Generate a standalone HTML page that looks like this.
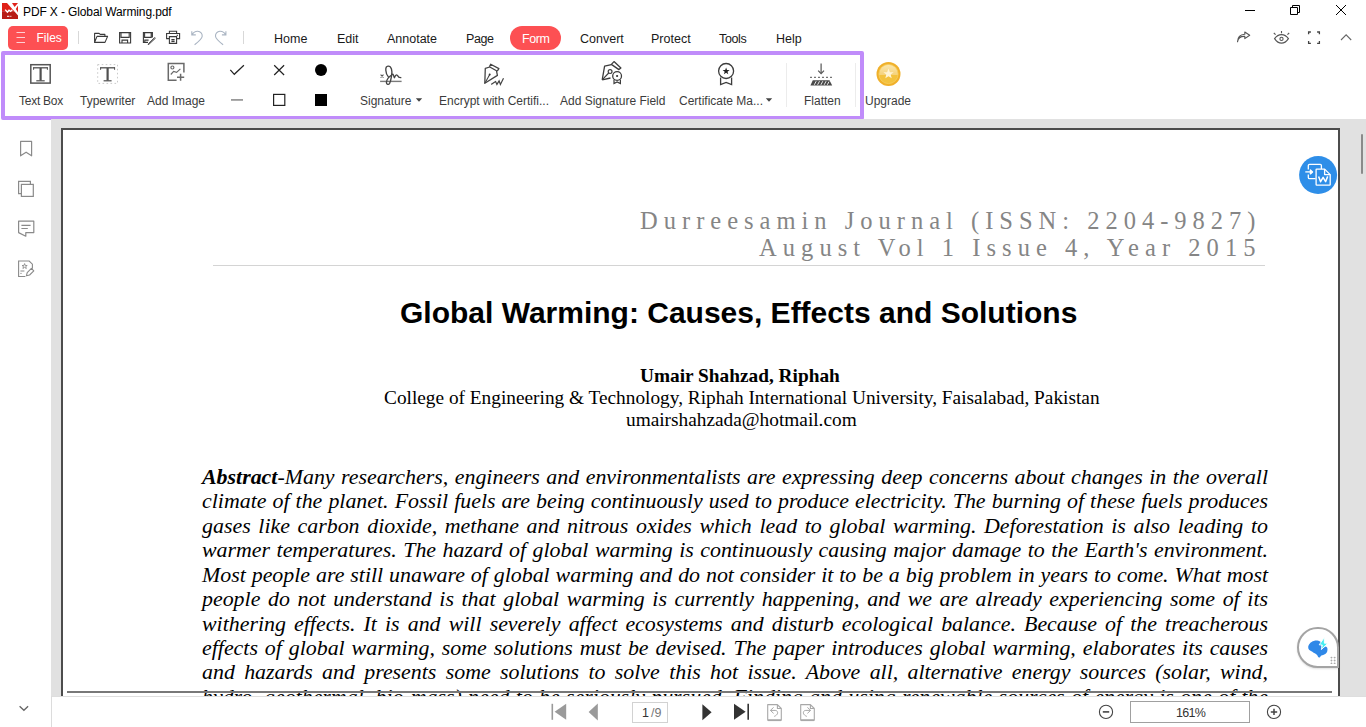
<!DOCTYPE html>
<html><head><meta charset="utf-8">
<style>
*{margin:0;padding:0;box-sizing:border-box}
html,body{width:1366px;height:727px;overflow:hidden;background:#fff;position:relative;font-family:"Liberation Sans",sans-serif}
.a{position:absolute;white-space:pre}
.ui{font-family:"Liberation Sans",sans-serif;color:#1f1f1f}
.lbl{font-size:12px;color:#3c3c3c;line-height:12px}
.menu{font-size:12.5px;color:#1a1a1a;line-height:13px;margin-top:0.8px}
svg{position:absolute;overflow:visible}
.serif{font-family:"Liberation Serif",serif}
.abs{font-family:"Liberation Serif",serif;font-style:italic;font-size:21.9px;line-height:21.9px;width:1066px;left:202px;text-align:justify;text-align-last:justify;white-space:normal;color:#000}
</style></head><body>

<!-- title bar -->
<svg style="left:2px;top:3px" width="16" height="16" viewBox="0 0 16 16">
  <rect x="0" y="0" width="16" height="8.2" fill="#df2118"/>
  <rect x="0" y="8.2" width="16" height="7.8" fill="#b81b15"/>
  <path d="M5 0H16V12.6Z" fill="#fff"/>
  <path d="M10 0H16L12.6 3.9Z" fill="#df2118"/>
  <path d="M16 2.4L13.8 6L16 9.4Z" fill="#df2118"/>
  <path d="M3.2 6.6L5.4 9.2L7 7.2L8.6 8.4L10.4 6.8" fill="none" stroke="#fff" stroke-width="1.4"/>
  <path d="M5 13.3H7.4M8.3 13.3H9.4" stroke="#fff" stroke-width="1"/>
</svg>
<div class="a ui" style="left:23px;top:4.5px;font-size:12px;line-height:14px;letter-spacing:-0.12px;color:#000">PDF X - Global Warming.pdf</div>

<!-- window controls -->
<svg style="left:1245px;top:5px" width="10" height="10"><path d="M0 5.5H10" stroke="#000" stroke-width="1"/></svg>
<svg style="left:1290px;top:5px" width="10" height="10"><path d="M0.5 2.5H7.5V9.5H0.5Z M2.5 2.5V0.5H9.5V7.5H7.5" fill="none" stroke="#000" stroke-width="1"/></svg>
<svg style="left:1336px;top:5px" width="10" height="10"><path d="M0 0L10 10M10 0L0 10" stroke="#000" stroke-width="1"/></svg>

<!-- menu bar -->
<div class="a" style="left:8px;top:26px;width:60px;height:24px;background:#fd5053;border-radius:5px"></div>
<svg style="left:16px;top:32px" width="10" height="12"><path d="M0.5 0.5H9M0.5 5.5H9M0.5 10.5H9" stroke="#ffd0d4" stroke-width="1.2"/></svg>
<div class="a ui" style="left:36.5px;top:30.5px;font-size:12px;line-height:14px;color:#fff">Files</div>
<div class="a" style="left:78px;top:31px;width:1px;height:13px;background:#d8d8d8"></div>
<div class="a" style="left:243px;top:31px;width:1px;height:13px;background:#d8d8d8"></div>

<div class="a" style="left:510px;top:26px;width:51px;height:24px;background:#fd5053;border-radius:12px"></div>
<div class="a menu" style="left:274px;top:32px">Home</div>
<div class="a menu" style="left:337px;top:32px">Edit</div>
<div class="a menu" style="left:387px;top:32px">Annotate</div>
<div class="a menu" style="left:466px;top:32px;letter-spacing:-0.4px">Page</div>
<div class="a menu" style="left:522px;top:32px;color:#fff;letter-spacing:-0.45px">Form</div>
<div class="a menu" style="left:580px;top:32px">Convert</div>
<div class="a menu" style="left:651px;top:32px">Protect</div>
<div class="a menu" style="left:719px;top:32px;letter-spacing:-0.35px">Tools</div>
<div class="a menu" style="left:776px;top:32px">Help</div>

<!-- toolbar -->
<div class="a" style="left:1px;top:51px;width:863px;height:69px;border:4px solid #c08cfa;border-radius:2px"></div>

<div class="a lbl" style="left:19px;top:95px;letter-spacing:-0.25px">Text Box</div>
<div class="a lbl" style="left:80px;top:95px">Typewriter</div>
<div class="a lbl" style="left:147px;top:95px">Add Image</div>
<div class="a lbl" style="left:360px;top:95px">Signature</div>
<div class="a lbl" style="left:439px;top:95px">Encrypt with Certifi...</div>
<div class="a lbl" style="left:560px;top:95px">Add Signature Field</div>
<div class="a lbl" style="left:679px;top:95px">Certificate Ma...</div>
<div class="a lbl" style="left:804px;top:95px">Flatten</div>
<div class="a lbl" style="left:865px;top:95px">Upgrade</div>

<!-- menu icons -->
<svg style="left:90px;top:28px" width="22" height="18" viewBox="90 28 22 18"><path d="M94.6 42.4V33.4H99.1L100.2 34.4H104.9V36.3M94.6 42.4L97 36.4H107.6L105 42.4Z" fill="none" stroke="#3a3a3a" stroke-width="1.1" stroke-linejoin="round"/></svg>
<svg style="left:116px;top:28px" width="18" height="18" viewBox="116 28 18 18"><path d="M119.6 32.6H130.6V43H119.6Z M121 32.6V37.4H129.2V32.6 M122 43V40.1H127.6V43" fill="none" stroke="#3a3a3a" stroke-width="1.1"/></svg>
<svg style="left:140px;top:28px" width="18" height="18" viewBox="140 28 18 18"><path d="M148 42.4H143.4V32.6H152.4V37.4 M144.6 32.6V37.4H151.2V32.6 M144.8 42.4V40.1H148.6" fill="none" stroke="#3a3a3a" stroke-width="1.1"/><path d="M155.3 38.3L149 44.2L148.2 44.6L148.6 43.6L154.6 37.6Z" fill="none" stroke="#3a3a3a" stroke-width="1"/></svg>
<svg style="left:164px;top:28px" width="18" height="18" viewBox="164 28 18 18"><path d="M169.4 33.5V31.3H176.6V33.5 M169.4 38.6H166.6V33.5H179.6V38.6H176.6 M169.4 36.6H176.6V43.4H169.4Z M171.4 39.6H174.6 M171.4 41.4H174.6" fill="none" stroke="#3a3a3a" stroke-width="1.1"/><path d="M176.6 35.3H178" stroke="#3a3a3a" stroke-width="1"/></svg>
<svg style="left:188px;top:28px" width="18" height="18" viewBox="188 28 18 18"><path d="M191.8 31.2V34.9H195.8 M192.2 34.6C193.5 32.2 195.8 31.2 197.8 31.3C200.6 31.5 202.4 33.8 202.2 36.2C202 38.6 199.6 40.8 194.6 44.8" fill="none" stroke="#a9b4c2" stroke-width="1.1"/></svg>
<svg style="left:212px;top:28px" width="18" height="18" viewBox="212 28 18 18"><path d="M225.9 31.2V34.9H221.9 M225.5 34.6C224.2 32.2 221.9 31.2 219.9 31.3C217.1 31.5 215.3 33.8 215.5 36.2C215.7 38.6 218.1 40.8 223.1 44.8" fill="none" stroke="#a9b4c2" stroke-width="1.1"/></svg>

<!-- right menu icons -->
<svg style="left:1235px;top:30px" width="18" height="16" viewBox="1235 30 18 16"><path d="M1237.5 41.8C1238 38.5 1240.5 36.2 1244.8 36.4V38.6L1249.7 35.3L1244.8 32V34.2C1240 34.4 1237.6 37.8 1237.5 41.8Z" fill="none" stroke="#555" stroke-width="1.1" stroke-linejoin="round"/></svg>
<svg style="left:1272px;top:30px" width="20" height="16" viewBox="1272 30 20 16"><path d="M1274.6 38.6C1276.6 35.8 1279 34.6 1281.5 34.6C1284 34.6 1286.4 35.8 1288.4 38.6C1286.4 41.6 1284 43.2 1281.5 43.2C1279 43.2 1276.6 41.6 1274.6 38.6Z" fill="none" stroke="#555" stroke-width="1.2"/><circle cx="1281.5" cy="38.9" r="1.6" fill="none" stroke="#555" stroke-width="1.1"/><path d="M1281.5 31V33.3 M1273.8 33L1275.6 34.6 M1289.2 33L1287.4 34.6" stroke="#555" stroke-width="1.1"/></svg>
<svg style="left:1306px;top:30px" width="16" height="16" viewBox="1306 30 16 16"><path d="M1308.6 34.3V32H1310.9 M1317.1 32H1319.4V34.3 M1319.4 41V43.3H1317.1 M1310.9 43.3H1308.6V41" fill="none" stroke="#444" stroke-width="1.3"/></svg>
<svg style="left:1339px;top:30px" width="14" height="14" viewBox="1339 30 14 14"><path d="M1341 40L1346.1 34.9L1351.2 40" fill="none" stroke="#666" stroke-width="1.1"/></svg>

<!-- toolbar icons -->
<svg style="left:28px;top:62px" width="25" height="24" viewBox="28 62 25 24"><rect x="30.8" y="64.7" width="19.4" height="18.4" fill="none" stroke="#565656" stroke-width="1.5"/><path d="M33.4 67.8H47.6" stroke="#505050" stroke-width="1.3"/><path d="M33.6 67.2V69.8M47.4 67.2V69.8" stroke="#505050" stroke-width="1"/><path d="M40.6 68V80.6" stroke="#505050" stroke-width="2.2"/><path d="M36.3 80.8H44.7" stroke="#505050" stroke-width="1.2"/></svg>
<svg style="left:95px;top:62px" width="25" height="24" viewBox="95 62 25 24"><rect x="97.7" y="64.6" width="19.8" height="18.8" fill="none" stroke="#bdbdbd" stroke-width="0.8" stroke-dasharray="1.6 2.4"/><path d="M100.4 67.8H114.8" stroke="#505050" stroke-width="1.3"/><path d="M100.6 67.2V69.8M114.6 67.2V69.8" stroke="#505050" stroke-width="1"/><path d="M107.6 68V80.6" stroke="#505050" stroke-width="2.2"/><path d="M103.6 80.8H111.6" stroke="#505050" stroke-width="1.2"/></svg>
<svg style="left:165px;top:60px" width="24" height="24" viewBox="165 60 24 24"><path d="M176.6 80.3H168.3V63.4H183.9V72.4" fill="none" stroke="#6a6a6a" stroke-width="1.5"/><circle cx="172.4" cy="67.5" r="1.5" fill="none" stroke="#6a6a6a" stroke-width="1.2"/><path d="M170.8 74.5L173.6 71.4L176.6 72.4L180.4 68.9" fill="none" stroke="#6a6a6a" stroke-width="1.2"/><path d="M177 77.3H184.2M180.6 73.8V80.8" stroke="#6a6a6a" stroke-width="1.5"/></svg>

<svg style="left:228px;top:62px" width="100" height="48" viewBox="228 62 100 48">
<path d="M230.3 69.8L234.3 74.3L243.9 65.2" fill="none" stroke="#222" stroke-width="1.2"/>
<path d="M274.2 65.2L284.1 75M284.1 65.2L274.2 75" stroke="#222" stroke-width="1.2"/>
<circle cx="321" cy="70" r="6" fill="#000"/>
<path d="M231 99.9H243" stroke="#9a9a9a" stroke-width="1.8"/>
<rect x="273.6" y="94.4" width="11.2" height="11" fill="none" stroke="#222" stroke-width="1.2"/>
<rect x="315" y="94" width="12" height="12" fill="#000"/>
</svg>

<svg style="left:375px;top:58px" width="35" height="32" viewBox="0 0 35 32"><path d="M5.1 23.4H26.6" stroke="#7a7a7a" stroke-width="1.4"/><path d="M5.6 16.6L8.5 19.5M8.5 16.6L5.6 19.5" stroke="#555" stroke-width="1.1"/><path d="M13.2 18.6C10.5 15.5 9.6 8.4 13 8.1C16.5 7.8 17.5 13 16.6 17.5C16 21 15.8 23.5 14.5 25.6C13.6 26.8 11.6 26.6 11.4 24.6C11.3 22.4 12.8 19.6 17.6 16.3C18.6 16 19 19.8 19.4 19.8C20 18 20.8 16.8 21.6 16.8C22.8 16.8 23.2 19.4 24.4 19.4L25.8 19.6" fill="none" stroke="#444" stroke-width="1.35" stroke-linejoin="round" stroke-linecap="round"/></svg>

<svg style="left:478px;top:58px" width="32" height="32" viewBox="0 0 32 32"><path d="M6.8 25.3L7.3 10.3L11.8 9L18.5 12.8L19.4 17.4Z" fill="none" stroke="#444" stroke-width="1.3" stroke-linejoin="round"/><path d="M11.4 8.8L12.7 6.2L20.9 10.6L19.2 13.1" fill="none" stroke="#444" stroke-width="1.3" stroke-linejoin="round"/><path d="M7 25L11.6 16.8" stroke="#444" stroke-width="1.1"/><circle cx="11.7" cy="16.6" r="1" fill="#333"/><path d="M13.2 26.4C15 25.5 16.5 24 17.6 23.6L18.9 26.4L21.1 22.9L22.4 26.4L25.5 20.2" fill="none" stroke="#444" stroke-width="1.2"/></svg>

<svg style="left:596px;top:56px" width="32" height="32" viewBox="0 0 32 32"><path d="M6.2 23.8L8.6 10.1L15.4 8.6M6.2 23.8L14.5 22" fill="none" stroke="#3c3c3c" stroke-width="1.3" stroke-linejoin="round"/><path d="M15.4 8.4L18 5.6L24.9 11.9L22.9 13.6Z" fill="none" stroke="#3c3c3c" stroke-width="1.3" stroke-linejoin="round"/><circle cx="14.1" cy="15.6" r="1.9" fill="none" stroke="#3c3c3c" stroke-width="1.2"/><path d="M6.4 23.6L12.7 17" stroke="#3c3c3c" stroke-width="1.1"/><circle cx="21.1" cy="20" r="4.4" fill="#fff" stroke="#3c3c3c" stroke-width="1.3"/><circle cx="21.1" cy="20" r="1.1" fill="#333"/><path d="M18 23.8V27.6L21.1 26L24.4 27.6V23.8" fill="none" stroke="#3c3c3c" stroke-width="1.2"/></svg>

<svg style="left:710px;top:56px" width="32" height="32" viewBox="0 0 32 32"><circle cx="16.1" cy="15" r="7.5" fill="none" stroke="#3c3c3c" stroke-width="1.3"/><path d="M16.1 11.5L17 14.1H19.6L17.5 15.7L18.3 18.3L16.1 16.7L13.9 18.3L14.7 15.7L12.6 14.1H15.2Z" fill="#222"/><path d="M10.6 21.4V28.6L16.1 26.4L21.6 28.6V21.4" fill="none" stroke="#3c3c3c" stroke-width="1.3"/></svg>

<svg style="left:806px;top:60px" width="30" height="28" viewBox="806 60 30 28"><path d="M821.1 63.5V73" stroke="#555" stroke-width="1.2"/><path d="M818.2 70.6L821.1 73.6L824 70.6" fill="none" stroke="#555" stroke-width="1.2"/><path d="M810.1 77.4H832.6" stroke="#666" stroke-width="1.3" stroke-dasharray="1.8 2.2"/><path d="M812.8 80.3H829.5L832.2 85.6H810.4Z" fill="#4a4a4a"/><path d="M814.3 84.8L816.2 81.2M817.6 84.8L819.5 81.2M820.9 84.8L822.8 81.2M824.2 84.8L826.1 81.2M827.3 84.8L829 81.6" stroke="#e8e8e8" stroke-width="1"/></svg>
<div class="a" style="left:786px;top:63px;width:1px;height:44px;background:#ececec"></div>
<div class="a" style="left:855px;top:63px;width:1px;height:44px;background:#ececec"></div>

<svg style="left:874px;top:60px" width="28" height="28" viewBox="874 60 28 28"><defs><linearGradient id="cg" x1="0" y1="0" x2="0" y2="1"><stop offset="0" stop-color="#fbe7b0"/><stop offset="0.55" stop-color="#f5d27a"/><stop offset="0.56" stop-color="#f3c23e"/><stop offset="1" stop-color="#f3c23e"/></linearGradient></defs><circle cx="888.5" cy="74" r="12" fill="#f0b02a"/><circle cx="888.5" cy="74" r="9.6" fill="url(#cg)" stroke="#f6cf60" stroke-width="0.8"/><path d="M888.5 68.6L889.9 72.2L893.6 72.3L890.7 74.6L891.7 78.3L888.5 76.2L885.3 78.3L886.3 74.6L883.4 72.3L887.1 72.2Z" fill="#fff4d4"/></svg>

<svg style="left:412px;top:96px" width="12" height="8" viewBox="412 96 12 8"><path d="M415.8 98.2H422.2L419 101.8Z" fill="#444"/></svg>
<svg style="left:762px;top:96px" width="12" height="8" viewBox="762 96 12 8"><path d="M765.8 98.2H772.2L769 101.8Z" fill="#444"/></svg>

<!-- sidebar icons -->
<svg style="left:16px;top:138px" width="22" height="142" viewBox="16 138 22 142">
<path d="M20.6 141.4H31.6V155.8L26.1 152.2L20.6 155.8Z" fill="none" stroke="#8a8a8a" stroke-width="1.2" stroke-linejoin="round"/>
<path d="M21.2 193.6H18.6V181.4H30.4V184.2" fill="none" stroke="#8a8a8a" stroke-width="1.2"/>
<rect x="21.4" y="184.4" width="11.9" height="12" fill="none" stroke="#8a8a8a" stroke-width="1.2"/>
<path d="M18.6 221.2H33.8V232.6H25.8V236.2L18.6 232.6Z" fill="none" stroke="#8a8a8a" stroke-width="1.2" stroke-linejoin="round"/>
<path d="M21.4 225.4H30.6M21.4 228.5H27.8" stroke="#8a8a8a" stroke-width="1.2"/>
<path d="M25.4 276.5H18.6V261H29.2L32.4 264.2V268.8" fill="none" stroke="#8a8a8a" stroke-width="1.1"/>
<path d="M24.6 263.6L25.3 265.5H27.2L25.7 266.6L26.3 268.5L24.6 267.3L22.9 268.5L23.5 266.6L22 265.5H23.9Z" fill="none" stroke="#8a8a8a" stroke-width="0.9"/>
<path d="M20.4 271H24.4M20.4 273.4H21.6" stroke="#8a8a8a" stroke-width="1"/>
<path d="M26.4 275.8L27.2 272.6L31.4 268.4L33.8 270.8L29.6 275Z" fill="none" stroke="#8a8a8a" stroke-width="1.1" stroke-linejoin="round"/>
</svg>
<svg style="left:16px;top:700px" width="16" height="14" viewBox="16 700 16 14"><path d="M19.6 706.2L23.9 710.3L28.1 706.2" fill="none" stroke="#666" stroke-width="1.3"/></svg>

<!-- doc area -->
<div class="a" style="left:51px;top:119px;width:1315px;height:578px;background:#e1e1e1;overflow:hidden">
  <div class="a" style="left:10px;top:9px;width:1279px;height:600px;background:#fff;border:2px solid #4c4c4c"></div>
</div>

<!-- doc content -->
<div class="a" style="left:51px;top:119px;width:1315px;height:577px;overflow:hidden">
<div class="a" style="left:-51px;top:-119px;width:1366px;height:727px">
<div class="a serif" style="left:560px;width:701.5px;text-align:right;top:208.7px;font-size:24.5px;line-height:24.5px;letter-spacing:6.0px;color:#858585">Durreesamin Journal (ISSN: 2204-9827)</div>
<div class="a serif" style="left:560px;width:701.5px;text-align:right;top:235.7px;font-size:24.5px;line-height:24.5px;letter-spacing:6.05px;color:#858585">August Vol 1 Issue 4, Year 2015</div>
<div class="a" style="left:213px;top:265px;width:1052px;height:1px;background:#d4d4d4"></div>
<div class="a" style="left:400px;top:298px;font-size:30px;line-height:30px;font-weight:bold;color:#000">Global Warming: Causes, Effects and Solutions</div>
<div class="a serif" style="left:640px;top:366px;font-size:19.32px;line-height:19.32px;font-weight:bold;color:#000">Umair Shahzad, Riphah</div>
<div class="a serif" style="left:384px;top:388px;font-size:19.32px;line-height:19.32px;color:#000">College of Engineering &amp; Technology, Riphah International University, Faisalabad, Pakistan</div>
<div class="a serif" style="left:626px;top:410px;font-size:19.32px;line-height:19.32px;color:#000">umairshahzada@hotmail.com</div>
<div class="a abs" style="top:465.96px"><b>Abstract</b>-Many researchers, engineers and environmentalists are expressing deep concerns about changes in the overall</div>
<div class="a abs" style="top:490.39px">climate of the planet. Fossil fuels are being continuously used to produce electricity. The burning of these fuels produces</div>
<div class="a abs" style="top:514.82px">gases like carbon dioxide, methane and nitrous oxides which lead to global warming. Deforestation is also leading to</div>
<div class="a abs" style="top:539.25px">warmer temperatures. The hazard of global warming is continuously causing major damage to the Earth's environment.</div>
<div class="a abs" style="top:563.68px">Most people are still unaware of global warming and do not consider it to be a big problem in years to come. What most</div>
<div class="a abs" style="top:588.11px">people do not understand is that global warming is currently happening, and we are already experiencing some of its</div>
<div class="a abs" style="top:612.54px">withering effects. It is and will severely affect ecosystems and disturb ecological balance. Because of the treacherous</div>
<div class="a abs" style="top:636.97px">effects of global warming, some solutions must be devised. The paper introduces global warming, elaborates its causes</div>
<div class="a abs" style="top:661.40px">and hazards and presents some solutions to solve this hot issue. Above all, alternative energy sources (solar, wind,</div>
<div class="a abs" style="top:685.83px">hydro, geothermal, bio-mass) need to be seriously pursued. Finding and using renewable sources of energy is one of the</div>
<div class="a" style="left:67px;top:691px;width:1265px;height:2px;background:#787878"></div>
</div></div>

<!-- status bar -->
<div class="a" style="left:51px;top:696px;width:1315px;height:1px;background:#dedede"></div>
<div class="a" style="left:51px;top:696px;width:1px;height:31px;background:#dcdcdc"></div>


<!-- scrollbar thumb -->
<div class="a" style="left:1361px;top:134px;width:2px;height:40px;background:#8a8a8a;border-radius:1px"></div>

<!-- float word button -->
<svg style="left:1295px;top:152px" width="44" height="44" viewBox="1295 152 44 44">
<circle cx="1318.1" cy="175" r="19" fill="#2e8ee8"/>
<g transform="translate(1295 152)" fill="none" stroke="#fff" stroke-width="1.3" stroke-linejoin="round">
<path d="M26.4 17V13.6Q26.4 12.3 25.2 12.3H14.6Q13.3 12.3 13.3 13.6V17.4 M13.3 22.4V25.4Q13.3 26.6 14.6 26.6H20.6"/>
<path d="M10.3 19.9H16.6"/>
<path d="M15.4 17.9L17.6 19.9L15.4 21.9Z" fill="#fff"/>
<path d="M21.1 17.6Q21.1 17.1 21.7 17.1H29.6L35.2 22.6V32.6Q35.2 33.2 34.6 33.2H21.7Q21.1 33.2 21.1 32.6Z"/>
<path d="M29.6 17.1V22.6H35.2"/>
<path d="M23.6 24.4L25.6 29.7L28.1 25.4L30.6 29.7L32.7 24.4" stroke-width="1.5"/>
</g>
</svg>

<!-- AI button -->
<div class="a" style="left:1297px;top:627px;width:42px;height:41px;background:#fff;border:2px solid #a4a4a4;border-radius:21px 21px 0 21px;box-shadow:0 1px 2px rgba(0,0,0,0.12)"></div>
<svg style="left:1300px;top:630px" width="40" height="40" viewBox="1300 630 40 40">
<path d="M1308.2 646.9C1308.4 644.6 1310.6 641.6 1313.9 640.9C1316 640.4 1318.2 640.4 1320.8 641.9L1321.8 648.8L1325.7 646.6C1327 646.9 1327.9 648.6 1327.4 650.6C1327.2 652.6 1325.8 654.2 1324.2 654.6C1322.8 655.2 1321.6 655.4 1320.6 656.2C1320.2 657.6 1318.6 658 1318 656.8C1317.6 655.2 1316.8 654.2 1315.2 653.4C1313.6 652.8 1312.8 652 1311.4 651.2C1309.6 650.4 1308 649 1308.2 646.9Z" fill="#2f88e8"/>
<path d="M1324.3 637.6L1319.2 644.8L1322.3 645.1L1321.4 649.6L1327.6 643.3L1324.4 643.2Z" fill="#44eef2" stroke="#fff" stroke-width="0.9" stroke-linejoin="round"/>
<g fill="#8a8a8a"><circle cx="1331.4" cy="657.5" r="0.7"/><circle cx="1334.7" cy="657.5" r="0.7"/><circle cx="1331.4" cy="660.5" r="0.7"/><circle cx="1334.7" cy="660.5" r="0.7"/><circle cx="1331.4" cy="663.4" r="0.7"/><circle cx="1334.7" cy="663.4" r="0.7"/></g><path d="M1331.4 657V664M1334.7 657V664M1330.6 657.5H1335.5M1330.6 660.5H1335.5M1330.6 663.4H1335.5" stroke="#bdbdbd" stroke-width="0.4"/>
</svg>

<!-- status bar controls -->
<svg style="left:548px;top:700px" width="280" height="26" viewBox="548 700 280 26">
<path d="M552.3 703.8V719.8" stroke="#9a9a9a" stroke-width="1.6"/>
<path d="M566.2 703.8V719.8L554.6 711.8Z" fill="#9a9a9a"/>
<path d="M597.8 703.4V720.6L588.6 712Z" fill="#9a9a9a"/>
<path d="M702.4 704.2V720.2L711.6 712.2Z" fill="#333"/>
<path d="M734 703.8V719.8L745.6 711.8Z" fill="#333"/>
<path d="M748.2 703.8V719.8" stroke="#333" stroke-width="1.6"/>
<path d="M767.7 704.6H777.4L781.3 708.5V720.2H767.7Z M777.4 704.6V708.5H781.3" fill="none" stroke="#a8a8a8" stroke-width="1.1" stroke-linejoin="round"/>
<path d="M768 720.2H781" stroke="#a8a8a8" stroke-width="1.8"/>
<path d="M773.6 707.4L770.4 710.4L773.6 713.4 M770.6 710.4H775.2C777.2 710.4 777.8 712 777.6 713.2C777.3 714.6 775.8 715.8 774.2 716.4" fill="none" stroke="#a8a8a8" stroke-width="1"/>
<path d="M800.7 704.6H810.4L814.3 708.5V720.2H800.7Z M810.4 704.6V708.5H814.3" fill="none" stroke="#a8a8a8" stroke-width="1.1" stroke-linejoin="round"/>
<path d="M801 720.2H814" stroke="#a8a8a8" stroke-width="1.8"/>
<path d="M807.4 707.4L810.6 710.4L807.4 713.4 M810.4 710.4H805.8C803.8 710.4 803.2 712 803.4 713.2C803.7 714.6 805.2 715.8 806.8 716.4" fill="none" stroke="#a8a8a8" stroke-width="1"/>
</svg>
<div class="a" style="left:632px;top:701.5px;width:35.5px;height:21px;border:1px solid #d2d2d2;background:#fff"></div>
<div class="a ui" style="left:642px;top:706px;font-size:12.5px;line-height:14px;color:#333">1<span style="color:#777;margin-left:2px">/9</span></div>

<svg style="left:1096px;top:702px" width="20" height="20" viewBox="1096 702 20 20"><circle cx="1106" cy="711.9" r="6.6" fill="none" stroke="#444" stroke-width="1.1"/><path d="M1102.8 711.9H1109.2" stroke="#444" stroke-width="1.6"/></svg>
<div class="a" style="left:1130px;top:701px;width:120px;height:22px;border:1px solid #a0a0a0;background:#fff"></div>
<div class="a ui" style="left:1176px;top:706px;font-size:12.5px;line-height:14px;letter-spacing:-0.7px;color:#333">161%</div>
<svg style="left:1264px;top:702px" width="20" height="20" viewBox="1264 702 20 20"><circle cx="1274" cy="711.9" r="6.6" fill="none" stroke="#444" stroke-width="1.1"/><path d="M1270.8 711.9H1277.2M1274 708.7V715.1" stroke="#444" stroke-width="1.5"/></svg>

</body></html>
